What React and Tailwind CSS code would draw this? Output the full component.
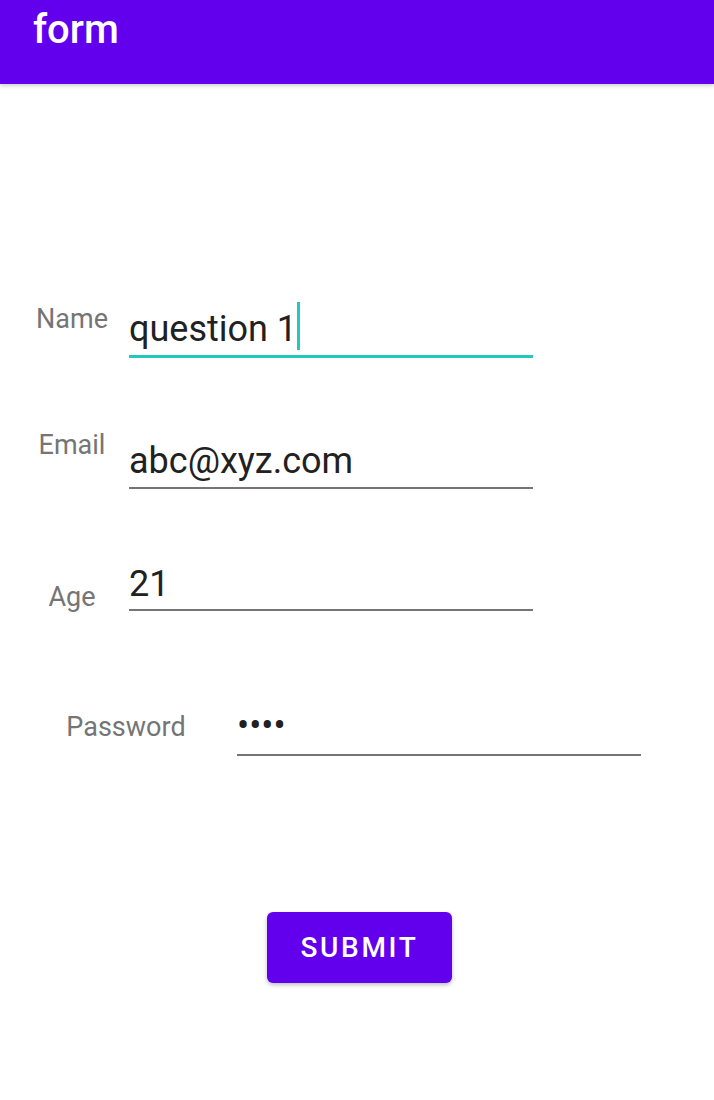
import { useState } from "react";

function App() {
    const [name] = useState("question 1");
    const [email] = useState("abc@xyz.com");
    const [age] = useState("21");

    return (
        <div className="min-h-[1100px] bg-white font-['Roboto',sans-serif]">
            <header className="h-[84px] bg-[#6200ee] px-[33px] shadow-[0_2px_4px_rgba(0,0,0,0.18)]">
                <h1 className="pt-[6px] text-[40px] leading-[48px] font-medium text-white">form</h1>
            </header>

            <main>
                {/* Name */}
                <div className="mt-[218px] flex items-start">
                    <label className="ml-[15px] mt-[1px] w-[114px] text-center text-[27px] leading-[32px] text-[#757575]">Name</label>
                    <div className="mt-[5px] w-[404px] border-b-[3px] border-[#22c9ba] pb-[4px]">
                        <div className="flex h-[44px]">
                            <span className="text-[36px] leading-[44px] text-[#212121]">{name}</span>
                            <span className="-mt-[5px] h-[48px] w-[3px] bg-[#22c9ba]"></span>
                        </div>
                    </div>
                </div>

                {/* Email */}
                <div className="mt-[71px] flex items-start">
                    <label className="ml-[15px] w-[114px] text-center text-[27px] leading-[32px] text-[#757575]">Email</label>
                    <div className="mt-[10px] w-[404px] border-b-2 border-[#757575] pb-[4px]">
                        <span className="block text-[36px] leading-[44px] text-[#212121]">{email}</span>
                    </div>
                </div>

                {/* Age */}
                <div className="mt-[73px] flex items-start">
                    <label className="ml-[15px] mt-[19px] w-[114px] text-center text-[27px] leading-[32px] text-[#757575]">Age</label>
                    <div className="w-[404px] border-b-2 border-[#757575] pb-[3px]">
                        <span className="block text-[36px] leading-[44px] text-[#212121]">{age}</span>
                    </div>
                </div>

                {/* Password */}
                <div className="mt-[91px] flex items-start">
                    <label className="ml-[15px] mt-[7px] w-[222px] text-center text-[27px] leading-[32px] text-[#757575]">Password</label>
                    <div className="w-[404px] border-b-2 border-[#757575] pb-[6px]">
                        <span className="block text-[36px] leading-[44px] text-[#212121]">••••</span>
                    </div>
                </div>

                <button
                    type="button"
                    className="ml-[267px] mt-[156px] block h-[71px] w-[185px] rounded-[6px] bg-[#6200ee] text-[28px] font-medium tracking-[2.7px] text-white shadow-[0_2px_4px_rgba(0,0,0,0.25)]"
                >
                    SUBMIT
                </button>
            </main>
        </div>
    );
}

export default App;
